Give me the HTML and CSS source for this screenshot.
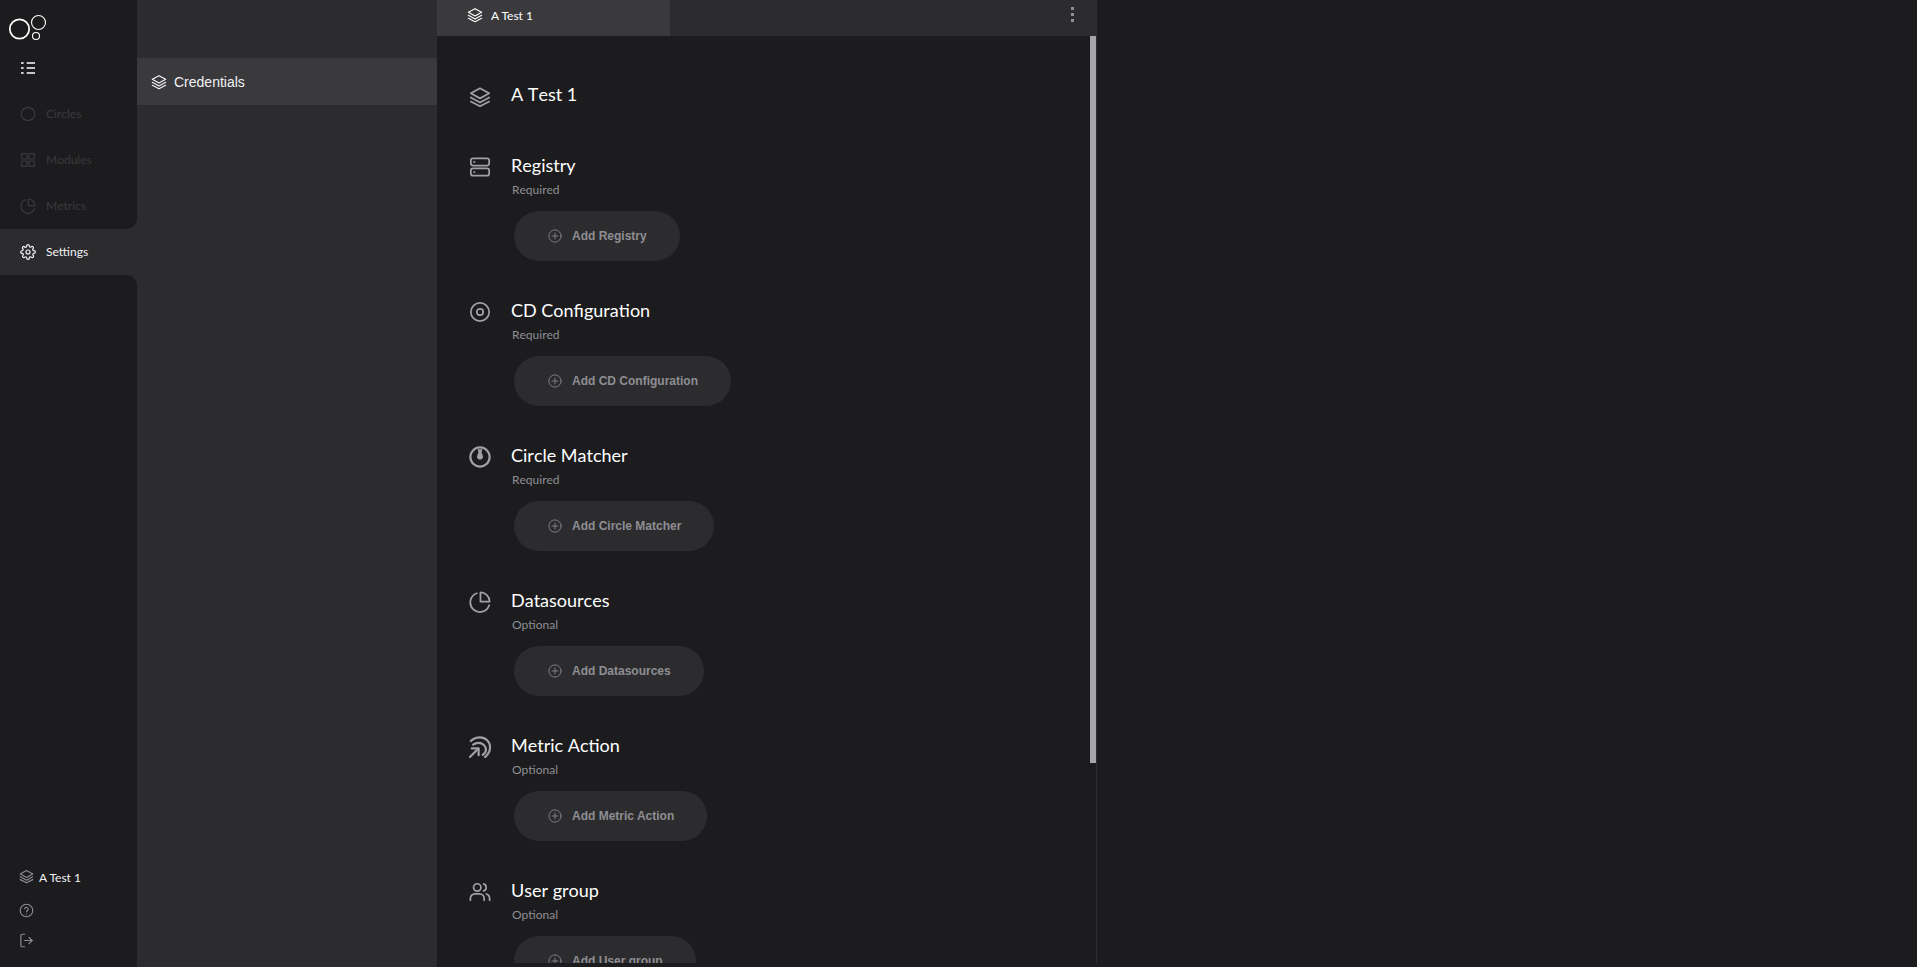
FILE: index.html
```html
<!DOCTYPE html>
<html lang="en">
<head>
  <meta charset="UTF-8" />
  <title>Settings - Credentials</title>
  <link rel="stylesheet" href="styles.css">
</head>
<body>

  <svg class="sprites" xmlns="http://www.w3.org/2000/svg">
    <symbol id="i-layers" viewBox="0 0 24 24">
      <path d="M12 2.500 22 8l-10 5.500L2 8z"/>
      <path d="M2 12.500l10 5.500 10-5.500"/>
      <path d="M2 17l10 5 10-5"/>
    </symbol>
    <symbol id="i-server" viewBox="0 0 24 24">
      <rect x="2" y="2.500" width="20" height="8" rx="2.500"/>
      <rect x="2" y="13.500" width="20" height="8" rx="2.500"/>
      <path d="M5.500 6.500h.5M5.500 17.500h.5"/>
    </symbol>
    <symbol id="i-target" viewBox="0 0 24 24">
      <circle cx="12" cy="12" r="10"/>
      <circle cx="12" cy="12" r="3.500"/>
    </symbol>
    <symbol id="i-matcher" viewBox="0 0 24 24">
      <circle class="heavy" cx="12" cy="12" r="10.500"/>
      <path class="solid" d="M9.500 3.500h5l-.8 3.500 1.200 3a3.300 3.300 0 1 1-5.800 0l1.200-3z"/>
    </symbol>
    <symbol id="i-pie" viewBox="0 0 24 24">
      <path d="M22 15.500A10.500 10.500 0 1 1 8.500 2.500"/>
      <path d="M12.500 1.500a10 10 0 0 1 10 10h-10z"/>
    </symbol>
    <symbol id="i-action" viewBox="0 0 24 24">
      <g class="heavy">
        <path d="M1 23l9-9"/>
        <path d="M3 13.500h7.500V21"/>
        <path d="M4.500 9.500c2-1.500 4-2 6-2 4.500 0 8 3.500 8 7.500 0 2-1 4-3.500 5.500"/>
        <path d="M2 5.500C5 2.500 9 1.500 12 1.500c6 0 11 5 11 10.500 0 4-2 8-5.500 11"/>
      </g>
    </symbol>
    <symbol id="i-users" viewBox="0 0 24 24">
      <circle cx="9" cy="7" r="4"/>
      <path d="M1.500 21v-2a5 5 0 0 1 5-5h5a5 5 0 0 1 5 5v2"/>
      <path d="M16 3.200a4 4 0 0 1 0 7.600"/>
      <path d="M19 14.200a5 5 0 0 1 3.500 4.800v2"/>
    </symbol>
    <symbol id="i-plus" viewBox="0 0 24 24">
      <circle cx="12" cy="12" r="10.500"/>
      <path d="M12 7v10M7 12h10"/>
    </symbol>
    <symbol id="i-list" viewBox="0 0 24 24">
      <path class="flat" d="M1.500 4.500h4M1.500 12h4M1.500 19.500h4M10 4.500h12.500M10 12h12.500M10 19.500h12.500"/>
    </symbol>
    <symbol id="i-circle" viewBox="0 0 24 24">
      <circle cx="12" cy="12" r="10"/>
    </symbol>
    <symbol id="i-grid" viewBox="0 0 24 24">
      <rect x="2.500" y="2.500" width="8" height="8"/>
      <rect x="13.500" y="2.500" width="8" height="8"/>
      <rect x="2.500" y="13.500" width="8" height="8"/>
      <rect x="13.500" y="13.500" width="8" height="8"/>
    </symbol>
    <symbol id="i-gear" viewBox="0 0 24 24">
      <circle cx="12" cy="12" r="3"/>
      <path d="M19.400 15a1.650 1.650 0 0 0 .33 1.820l.06.06a2 2 0 1 1-2.830 2.830l-.06-.06a1.650 1.650 0 0 0-2.800 1.170V21a2 2 0 1 1-4 0v-.09A1.650 1.650 0 0 0 7.300 19.740l-.06.06a2 2 0 1 1-2.830-2.830l.06-.06a1.650 1.650 0 0 0-1.170-2.800H3a2 2 0 1 1 0-4h.09A1.650 1.650 0 0 0 4.260 7.300l-.06-.06a2 2 0 1 1 2.830-2.830l.06.06a1.650 1.650 0 0 0 2.800-1.170V3a2 2 0 1 1 4 0v.09a1.650 1.650 0 0 0 2.800 1.170l.06-.06a2 2 0 1 1 2.830 2.830l-.06.06a1.650 1.650 0 0 0 1.170 2.800H21a2 2 0 1 1 0 4h-.09a1.650 1.650 0 0 0-1.510 1.110z"/>
    </symbol>
    <symbol id="i-help" viewBox="0 0 24 24">
      <circle cx="12" cy="12" r="10"/>
      <path d="M9 9a3 3 0 0 1 5.800 1c0 2-2.800 2.500-2.800 4"/>
      <path d="M12 17.500h.01"/>
    </symbol>
    <symbol id="i-logout" viewBox="0 0 24 24">
      <path d="M9 22H5a2 2 0 0 1-2-2V4a2 2 0 0 1 2-2h4"/>
      <path d="M16 17l5-5-5-5"/>
      <path d="M21 12H9"/>
    </symbol>
  </svg>

  <div class="app">
    <nav class="sidebar">
      <div class="sidebar-top">
        <svg class="logo" viewBox="0 0 48 46">
          <circle cx="19.500" cy="29" r="9.700"/>
          <circle class="thin" cx="38.500" cy="22.500" r="7"/>
          <circle class="thin" cx="36" cy="36" r="3.500"/>
        </svg>
        <div class="menu-toggle"><svg class="icon"><use href="#i-list"/></svg></div>
        <a class="nav-item disabled"><svg class="icon"><use href="#i-circle"/></svg>Circles</a>
        <a class="nav-item disabled"><svg class="icon"><use href="#i-grid"/></svg>Modules</a>
        <a class="nav-item disabled"><svg class="icon"><use href="#i-pie"/></svg>Metrics</a>
      </div>
      <a class="nav-item active"><svg class="icon"><use href="#i-gear"/></svg>Settings</a>
      <div class="sidebar-bottom">
        <div class="foot-item workspace"><svg class="foot-icon"><use href="#i-layers"/></svg>A Test 1</div>
        <div class="foot-item help"><svg class="foot-icon"><use href="#i-help"/></svg></div>
        <div class="foot-item logout"><svg class="foot-icon"><use href="#i-logout"/></svg></div>
      </div>
    </nav>

    <aside class="list-panel">
      <div class="list-item"><svg class="list-icon"><use href="#i-layers"/></svg>Credentials</div>
    </aside>

    <main class="content">
      <div class="tab-bar">
        <div class="tab"><svg class="tab-icon"><use href="#i-layers"/></svg>A Test 1</div>
        <div class="more"><span></span><span></span><span></span></div>
      </div>

      <div class="scroller">
        <section class="head-row">
          <svg class="sec-icon"><use href="#i-layers"/></svg>
          <h1>A Test 1</h1>
        </section>

        <section class="sec">
          <svg class="sec-icon"><use href="#i-server"/></svg>
          <div>
            <h2>Registry</h2>
            <p>Required</p>
            <button><svg class="plus"><use href="#i-plus"/></svg>Add Registry</button>
          </div>
        </section>

        <section class="sec">
          <svg class="sec-icon"><use href="#i-target"/></svg>
          <div>
            <h2>CD Configuration</h2>
            <p>Required</p>
            <button><svg class="plus"><use href="#i-plus"/></svg>Add CD Configuration</button>
          </div>
        </section>

        <section class="sec">
          <svg class="sec-icon"><use href="#i-matcher"/></svg>
          <div>
            <h2>Circle Matcher</h2>
            <p>Required</p>
            <button><svg class="plus"><use href="#i-plus"/></svg>Add Circle Matcher</button>
          </div>
        </section>

        <section class="sec">
          <svg class="sec-icon"><use href="#i-pie"/></svg>
          <div>
            <h2>Datasources</h2>
            <p>Optional</p>
            <button><svg class="plus"><use href="#i-plus"/></svg>Add Datasources</button>
          </div>
        </section>

        <section class="sec">
          <svg class="sec-icon"><use href="#i-action"/></svg>
          <div>
            <h2>Metric Action</h2>
            <p>Optional</p>
            <button><svg class="plus"><use href="#i-plus"/></svg>Add Metric Action</button>
          </div>
        </section>

        <section class="sec">
          <svg class="sec-icon"><use href="#i-users"/></svg>
          <div>
            <h2>User group</h2>
            <p>Optional</p>
            <button><svg class="plus"><use href="#i-plus"/></svg>Add User group</button>
          </div>
        </section>

        <div class="scroll-thumb"></div>
      </div>
    </main>
  </div>
</body>
</html>
```

FILE: styles.css
```css
* {
  box-sizing: border-box;
}

html,
body {
  height: 100%;
  margin: 0;
  overflow: hidden;
}

body {
  background: #1c1c1e;
  color: #fff;
  font-family: "Lato", "Liberation Sans", sans-serif;
  font-kerning: none;
}

.sprites {
  display: none;
}

svg {
  fill: none;
  stroke: currentColor;
  stroke-linecap: round;
  stroke-linejoin: round;
  stroke-width: 2;
}

svg .solid {
  fill: currentColor;
  stroke: none;
}

svg .heavy {
  stroke-width: 2.4;
}

svg .flat {
  stroke-width: 2.6;
  stroke-linecap: butt;
}

.app {
  display: flex;
  height: 967px;
}

/* left nav */
.sidebar {
  width: 137px;
  display: flex;
  flex-direction: column;
  background: #2c2c2e;
}

.sidebar-top {
  background: #1c1c1e;
  border-bottom-right-radius: 10px;
}

.logo {
  display: block;
  width: 48px;
  height: 46px;
  color: #fff;
  stroke-width: 1.7;
}

.logo .thin {
  stroke-width: 1.1;
}

.menu-toggle {
  height: 44px;
  margin-bottom: 1px;
  display: flex;
  align-items: center;
  padding-left: 20px;
  color: #fff;
}

.icon {
  width: 16px;
  height: 16px;
  flex-shrink: 0;
  stroke-width: 1.8;
}

.nav-item {
  height: 46px;
  display: flex;
  align-items: center;
  gap: 10px;
  padding: 0 0 2px 20px;
  font-size: 12px;
}

.nav-item .icon {
  margin-top: 2px;
}

.nav-item.disabled {
  color: #3a3a3c;
}

.nav-item.active {
  color: #f2f2f7;
  background: #2c2c2e;
}

.sidebar-bottom {
  flex: 1;
  display: flex;
  flex-direction: column;
  justify-content: flex-end;
  padding-bottom: 17px;
  background: #1c1c1e;
  border-top-right-radius: 10px;
}

.foot-item {
  height: 20px;
  display: flex;
  align-items: center;
  gap: 5px;
  padding-left: 19px;
  font-size: 12px;
  font-kerning: normal;
  color: #f2f2f7;
}

.foot-icon {
  width: 15px;
  height: 15px;
  color: #8e8e93;
  stroke-width: 1.8;
}

.workspace {
  margin-bottom: 13px;
}

.workspace .foot-icon {
  margin-bottom: 2px;
}

.help {
  margin-bottom: 10px;
}

/* credentials list */
.list-panel {
  width: 300px;
  padding-top: 58px;
  background: #2c2c2e;
}

.list-item {
  height: 47px;
  display: flex;
  align-items: center;
  gap: 7px;
  padding-left: 14px;
  background: #3a3a3c;
  color: #f2f2f7;
  font-family: "Liberation Sans", Arial, sans-serif;
  font-size: 14px;
}

.list-icon {
  width: 16px;
  height: 16px;
  stroke-width: 1.8;
}

/* main column */
.content {
  position: relative;
  width: 660px;
  display: flex;
  flex-direction: column;
  height: 963px;
  border-right: 1px solid #2c2c2e;
}

.tab-bar {
  height: 36px;
  flex-shrink: 0;
  display: flex;
  justify-content: space-between;
  background: #2c2c2e;
}

.tab {
  width: 233px;
  display: flex;
  align-items: center;
  gap: 8px;
  padding-left: 30px;
  padding-bottom: 6px;
  background: #3a3a3c;
  font-size: 12px;
  font-kerning: normal;
}

.tab-icon {
  width: 16px;
  height: 16px;
  stroke-width: 1.7;
}

.more {
  width: 49px;
  display: flex;
  flex-direction: column;
  gap: 3px;
  padding-top: 7px;
  padding-left: 24px;
}

.more span {
  width: 3px;
  height: 3px;
  background: #8e8e93;
}

.scroller {
  flex: 1;
  overflow: hidden;
  padding: 46px 0 0 31px;
}

.scroll-thumb {
  position: absolute;
  top: 36px;
  right: 0;
  width: 6px;
  height: 727px;
  background: #a5a5ab;
}

.head-row,
.sec {
  display: flex;
  gap: 19px;
}

.head-row {
  height: 24px;
  margin-bottom: 47px;
}

.sec-icon {
  width: 22px;
  height: 22px;
  margin: 3px 1px 0;
  flex-shrink: 0;
  color: #a0a0a5;
  stroke-width: 1.9;
}

.head-row .sec-icon {
  margin-top: 4px;
}

h1,
h2 {
  margin: 0;
  font-size: 18px;
  font-weight: 400;
  line-height: 24px;
  color: #fff;
}

.sec p {
  margin: 1px 0 9px 1px;
  font-size: 12px;
  line-height: 24px;
  color: #8e8e93;
}

button {
  height: 50px;
  display: flex;
  align-items: center;
  gap: 10px;
  margin: 0 0 37px 3px;
  padding: 0 33px 0 34px;
  border: none;
  border-radius: 25px;
  background: #2c2c2e;
  color: #8e8e93;
  font-family: "Liberation Sans", Arial, sans-serif;
  font-size: 12px;
  font-weight: 700;
}

.plus {
  width: 14px;
  height: 14px;
  stroke-width: 1.4;
}
```
